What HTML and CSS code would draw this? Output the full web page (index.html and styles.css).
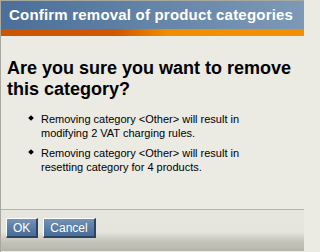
FILE: index.html
```html
<!DOCTYPE html>
<html>
<head>
<meta charset="utf-8">
<link rel="stylesheet" href="styles.css">
</head>
<body>
<div class="dialog">
  <div class="titlebar">Confirm removal of product categories</div>
  <div class="accent"></div>
  <div class="content">
    <h1 class="question">Are you sure you want to remove this category?</h1>
    <ul class="effects">
      <li>Removing category &lt;Other&gt; will result in modifying 2 VAT charging rules.</li>
      <li>Removing category &lt;Other&gt; will result in resetting category for 4 products.</li>
    </ul>
  </div>
  <div class="footer">
    <button class="btn">OK</button>
    <button class="btn">Cancel</button>
  </div>
</div>
</body>
</html>
```
FILE: styles.css
```css
html, body {
  margin: 0;
  padding: 0;
  background: #ebeae3;
}
.dialog {
  width: 304px;
  height: 252px;
  box-sizing: border-box;
  border-left: 1px solid #a9a89f;
  border-top: 1px solid #a9a89f;
  display: flex;
  flex-direction: column;
  font-family: "Liberation Sans", Arial, sans-serif;
  background: #ebeae3;
  overflow: hidden;
}
.titlebar {
  height: 28px;
  box-sizing: border-box;
  padding: 5px 0 0 8px;
  background: linear-gradient(to right, #4b6f99, #7d99b7);
  color: #fff;
  font-weight: bold;
  font-size: 15px;
  line-height: 18px;
  letter-spacing: 0.2px;
  white-space: nowrap;
}
.accent {
  height: 7px;
  background: linear-gradient(to right, #cc5500 0%, #cf5800 38%, #f08e00 55%, #f29100 100%);
}
.content {
  flex: 1;
  padding: 22px 6px 0 6px;
}
.question {
  margin: 0;
  font-size: 18px;
  line-height: 21px;
  font-weight: bold;
  color: #000;
}
.effects {
  margin: 12px 0 0 0;
  padding: 0 0 0 34px;
  width: 240px;
  font-size: 11px;
  line-height: 14px;
  color: #000;
  list-style: none;
}
.effects li {
  position: relative;
  margin-bottom: 6px;
}
.effects li::before {
  content: "";
  position: absolute;
  left: -12px;
  top: 4px;
  width: 4px;
  height: 4px;
  background: #000;
  transform: rotate(45deg);
}
.footer {
  height: 43px;
  box-sizing: border-box;
  border-top: 1px solid #b5b4ab;
  padding: 8px 0 0 5px;
  display: flex;
  align-items: flex-start;
  gap: 5px;
  background: linear-gradient(to bottom, #e6e5de 0px, #e5e4dd 22px, #c4c3b9 32px, #b7b6ab 41px, #ebeae3 41px);
}
.btn {
  height: 20px;
  box-sizing: border-box;
  padding: 0 6px;
  border-style: solid;
  border-width: 1px 2px 2px 1px;
  border-color: #ffffff #2b4466 #2b4466 #ffffff;
  background: linear-gradient(to bottom, #7593b6, #557aa3 60%, #4a6d96);
  color: #fff;
  font-family: "Liberation Sans", Arial, sans-serif;
  font-size: 12px;
  line-height: 16px;
  cursor: pointer;
}
```
